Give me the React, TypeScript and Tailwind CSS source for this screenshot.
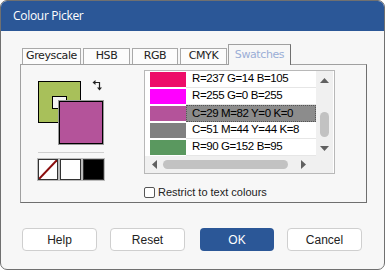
import React from 'react';

const rows = [
  { color: '#ed0e69', text: 'R=237 G=14 B=105' },
  { color: '#ff00ff', text: 'R=255 G=0 B=255' },
  { color: '#b4539a', text: 'C=29 M=82 Y=0 K=0', selected: true },
  { color: '#808080', text: 'C=51 M=44 Y=44 K=8' },
  { color: '#5a985f', text: 'R=90 G=152 B=95' },
];

const tabs = [
  { label: 'Greyscale', w: 'w-[59px]' },
  { label: 'HSB', w: 'w-[47px]' },
  { label: 'RGB', w: 'w-[46px]' },
  { label: 'CMYK', w: 'w-[47px]' },
];

export default function App() {
  return (
    <div className="w-[385px] h-[270px] bg-white">
      <div className="w-[385px] h-[270px] rounded-[7px] border border-[#707070] overflow-hidden bg-[#f7f7f7] flex flex-col font-['Liberation_Sans',Arial,sans-serif] text-[#222]">
        {/* title bar */}
        <div className="h-[30px] shrink-0 bg-[#2b5797] flex items-center pl-[12px] text-white text-[12px] tracking-[-0.3px] font-['Open_Sans',sans-serif]">
          Colour Picker
        </div>

        {/* tabs */}
        <div className="flex items-end ml-[21px] mt-[11px] h-[22px]">
          {tabs.map((t) => (
            <div
              key={t.label}
              className={`${t.w} h-[16px] mr-[2px] border border-b-0 border-[#a9a9a9] bg-[#fcfcfc] flex items-center justify-center text-[11px] font-['DejaVu_Sans',sans-serif] tracking-[-0.4px] text-[#222]`}
            >
              {t.label}
            </div>
          ))}
          <div className="w-[63px] h-[21px] -ml-[1px] border border-b-0 border-[#a0a0a0] border-r-[#707070] bg-[#f7f7f7] flex items-start pt-[2px] justify-center text-[11px] font-['DejaVu_Sans',sans-serif] tracking-[-0.4px] text-[#9aaed6] relative top-[1px]">
            Swatches
          </div>
        </div>

        {/* panel */}
        <div className="ml-[19px] w-[347px] h-[139px] border border-[#a0a0a0] border-r-[#6f6f6f] border-b-[#6f6f6f] flex">
          {/* current colours */}
          <div className="ml-[17px] mt-[16px] w-[66px] flex flex-col">
            <div className="relative w-[66px] h-[63px]">
              <div className="absolute left-0 top-0 w-[43px] h-[42px] bg-[#a8c05a] border border-black flex items-center justify-center">
                <div className="w-[15px] h-[13px] bg-[#f4f4f4] border border-black" />
              </div>
              <div className="absolute left-[21px] top-[20px] w-[44px] h-[43px] bg-[#b4539a] border border-black outline outline-1 outline-[#9a9a9a]" />
              <svg className="absolute left-[54px] -top-[1px]" width="11" height="11" viewBox="0 0 11 11">
                <path d="M3 2.5 H7.5 V8" fill="none" stroke="#222" strokeWidth="1.2" />
                <path d="M0.5 2.5 L3.5 0 V5 Z" fill="#222" />
                <path d="M7.5 10.5 L5 7.5 H10 Z" fill="#222" />
              </svg>
            </div>
            <div className="mt-[8px] h-px w-[66px] bg-[#cfcfcf]" />
            <div className="mt-[6px] flex gap-[2px]">
              <div className="w-[20px] h-[21px] border border-[#333] outline outline-1 outline-[#bbb] bg-white overflow-hidden">
                <svg width="18" height="19" viewBox="0 0 18 19">
                  <line x1="0" y1="19" x2="18" y2="0" stroke="#8b0d0d" strokeWidth="2" />
                </svg>
              </div>
              <div className="w-[21px] h-[21px] border border-[#333] outline outline-1 outline-[#bbb] bg-white" />
              <div className="w-[21px] h-[21px] border border-[#333] outline outline-1 outline-[#bbb] bg-black" />
            </div>
          </div>

          {/* swatch list */}
          <div className="ml-[40px] mt-[5px] flex flex-col">
            <div className="w-[191px] h-[104px] border border-[#b8b8b8] bg-white flex flex-col">
              <div className="flex h-[85px]">
                <div className="w-[171px] flex flex-col">
                  {rows.map((r) => (
                    <div key={r.text} className="h-[17px] flex">
                      <div className="ml-[5px] my-px w-[36px]" style={{ backgroundColor: r.color }} />
                      <div
                        className={
                          r.selected
                            ? 'flex-1 flex items-center pl-[5px] bg-[#8c8c8c] border border-dotted border-[#555] text-[11.5px] tracking-[-0.4px] text-black'
                            : 'flex-1 flex items-center pl-[6px] border-b border-[#e6e6e6] text-[11.5px] tracking-[-0.4px] text-black'
                        }
                      >
                        {r.text}
                      </div>
                    </div>
                  ))}
                </div>
                <div className="w-[17px] bg-[#f0f0f0] flex flex-col items-center">
                  <svg className="mt-[7px]" width="9" height="5" viewBox="0 0 9 5">
                    <path d="M0 5 L4.5 0 L9 5 Z" fill="#606060" />
                  </svg>
                  <div className="mt-[29px] w-[9px] h-[25px] rounded-[5px] bg-[#c2c2c2]" />
                  <svg className="mt-[9px]" width="9" height="5" viewBox="0 0 9 5">
                    <path d="M0 0 L9 0 L4.5 5 Z" fill="#606060" />
                  </svg>
                </div>
              </div>
              <div className="flex h-[17px]">
                <div className="w-[171px] bg-[#f0f0f0] flex items-center">
                  <svg className="ml-[7px]" width="5" height="9" viewBox="0 0 5 9">
                    <path d="M5 0 L5 9 L0 4.5 Z" fill="#606060" />
                  </svg>
                  <div className="ml-[6px] w-[125px] h-[9px] rounded-[5px] bg-[#c2c2c2]" />
                  <svg className="ml-[13px]" width="5" height="9" viewBox="0 0 5 9">
                    <path d="M0 0 L5 4.5 L0 9 Z" fill="#606060" />
                  </svg>
                </div>
                <div className="w-[17px] bg-[#f0f0f0]" />
              </div>
            </div>
            <label className="mt-[10px] flex items-center gap-[3px] text-[11px] text-[#222]">
              <span className="w-[11px] h-[11px] rounded-[2px] border border-[#555] bg-white" />
              Restrict to text colours
            </label>
          </div>
        </div>

        {/* buttons */}
        <div className="flex mt-[25px] ml-[21px] text-[12px]">
          <button className="w-[75px] h-[23px] rounded-[4px] border border-[#cfcfcf] bg-white text-[#222]">Help</button>
          <button className="ml-[13px] w-[75px] h-[23px] rounded-[4px] border border-[#cfcfcf] bg-white text-[#222]">Reset</button>
          <button className="ml-[15px] w-[74px] h-[23px] rounded-[4px] bg-[#2b5797] text-white">OK</button>
          <button className="ml-[13px] w-[75px] h-[23px] rounded-[4px] border border-[#cfcfcf] bg-white text-[#222]">Cancel</button>
        </div>
      </div>
    </div>
  );
}
